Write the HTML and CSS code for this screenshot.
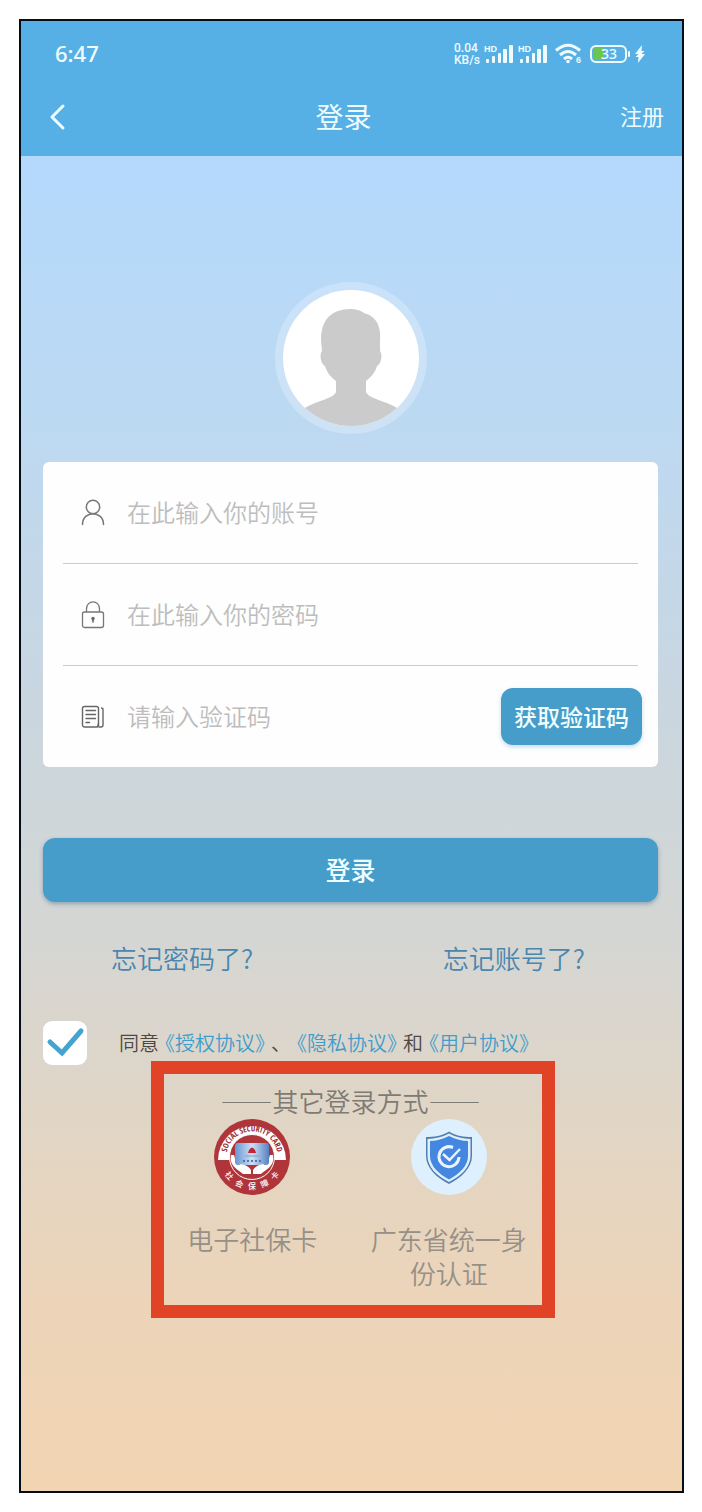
FILE: index.html
```html
<!DOCTYPE html>
<html lang="zh-CN">
<head>
    <meta charset="UTF-8">
    <meta name="viewport" content="width=device-width, initial-scale=1.0">
    <title>登录</title>
    <link rel="stylesheet" href="styles.css">
</head>
<body>
    <div class="phone">
        <header class="top">
            <div class="status-bar">
                <span class="time">6:47</span>
                <div class="status-icons">
                    <div class="speed"><span>0.04</span><span>KB/s</span></div>
                    <svg class="signal" width="30" height="24" viewBox="0 0 30 24" fill="currentColor">
                        <text x="0" y="10" class="svg-hd">HD</text>
                        <rect x="2" y="17" width="3" height="4" rx="1"/>
                        <rect x="8" y="14" width="3" height="7" rx="1"/>
                        <rect x="14" y="11" width="3" height="10" rx="1"/>
                        <rect x="19" y="7" width="4" height="14" rx="1"/>
                        <rect x="25" y="3" width="4" height="18" rx="1"/>
                    </svg>
                    <svg class="signal" width="30" height="24" viewBox="0 0 30 24" fill="currentColor">
                        <text x="0" y="10" class="svg-hd">HD</text>
                        <rect x="2" y="17" width="3" height="4" rx="1"/>
                        <rect x="8" y="14" width="3" height="7" rx="1"/>
                        <rect x="14" y="11" width="3" height="10" rx="1"/>
                        <rect x="19" y="7" width="4" height="14" rx="1"/>
                        <rect x="25" y="3" width="4" height="18" rx="1"/>
                    </svg>
                    <svg class="wifi" width="28" height="24" viewBox="0 0 28 24" fill="none" stroke="currentColor" stroke-width="3">
                        <path d="M1 8.500Q13 -2 25 8.500"/>
                        <path d="M5 13Q13 6 21 13"/>
                        <path d="M9 17Q13 13.500 17 17"/>
                        <circle cx="13" cy="19.500" r="1.800" fill="currentColor" stroke="none"/>
                        <text x="21" y="21" class="svg-six" fill="currentColor" stroke="none">6</text>
                    </svg>
                    <svg class="battery" width="42" height="20" viewBox="0 0 42 20">
                        <rect x="1" y="2" width="35" height="16" rx="5" fill="none" stroke="currentColor" stroke-width="2"/>
                        <path d="M6 4H13V16H6Q3 16 3 13V7Q3 4 6 4Z" fill="#6cc551"/>
                        <path d="M39 8V12" stroke="currentColor" stroke-width="2" stroke-linecap="round"/>
                        <text x="19" y="15" text-anchor="middle" class="svg-level" fill="currentColor">33</text>
                    </svg>
                    <svg class="bolt" width="12" height="20" viewBox="0 0 12 20" fill="currentColor">
                        <path d="M8 1L1 10H4.500L1.500 13H4.500L4 19L11 10H7.500L10.500 7H7.500Z"/>
                    </svg>
                </div>
            </div>
            <nav class="nav-bar">
                <a href="#" class="back" aria-label="返回">
                    <svg width="18" height="28" viewBox="0 0 18 28" fill="none" stroke="currentColor" stroke-width="3" stroke-linecap="round" stroke-linejoin="round">
                        <path d="M14 3L3 14L14 25"/>
                    </svg>
                </a>
                <h1>登录</h1>
                <a href="#" class="register">注册</a>
            </nav>
        </header>

        <main>
            <svg class="avatar" width="152" height="152" viewBox="0 0 152 152">
                <defs>
                    <clipPath id="face"><circle cx="76" cy="76" r="68"/></clipPath>
                </defs>
                <circle cx="76" cy="76" r="76" fill="#fff" opacity="0.25"/>
                <circle cx="76" cy="76" r="68" fill="#fff"/>
                <path clip-path="url(#face)" fill="#cbcbcb" d="M76 27C86 27 89 32 92 32C102 36 106 45 105 58L105 69C108 73 106 82 102 84C100 91 96 95 91 99L91 110C94 117 109 118 122 126L124 146H28L30 126C43 118 58 117 61 110L61 99C56 95 52 91 50 84C46 82 44 73 47 69L46 58C46 38 56 27 76 27Z"/>
            </svg>

            <form>
                <div class="card">
                    <div class="field">
                        <label for="account" aria-label="账号">
                            <svg width="24" height="28" viewBox="0 0 24 28" fill="none" stroke="#777" stroke-width="1.500" stroke-linecap="round">
                                <circle cx="12" cy="8" r="6.700"/>
                                <path d="M1.500 25.500C1.500 11 22.500 11 22.500 25.500"/>
                            </svg>
                        </label>
                        <input type="text" id="account" placeholder="在此输入你的账号">
                    </div>
                    <div class="field">
                        <label for="password" aria-label="密码">
                            <svg width="24" height="28" viewBox="0 0 24 28" fill="none" stroke="#777" stroke-width="1.300">
                                <path d="M5.500 11V8C5.500 -1.500 18.500 -1.500 18.500 8V11"/>
                                <rect x="1.500" y="11" width="21" height="15.500" rx="2"/>
                                <circle cx="12" cy="17.500" r="1.700" fill="#666" stroke="none"/>
                                <path d="M12 17.500V21.500" stroke="#666" stroke-width="1.600"/>
                            </svg>
                        </label>
                        <input type="password" id="password" placeholder="在此输入你的密码">
                    </div>
                    <div class="field">
                        <label for="code" aria-label="验证码">
                            <svg width="24" height="28" viewBox="0 0 24 28" fill="none" stroke="#666" stroke-width="1.400">
                                <rect x="1.500" y="3.500" width="16" height="20.500" rx="2"/>
                                <path d="M17.500 24H20Q22 24 22 22V6.500Q22 5 20 5M16 24Q17.500 23 17.500 20"/>
                                <path d="M5 7.500H14.500M5 11.500H14.500M5 15.500H14.500M5 19.500H8.500" stroke-linecap="round"/>
                            </svg>
                        </label>
                        <input type="text" id="code" placeholder="请输入验证码">
                        <button type="button" class="code-button">获取验证码</button>
                    </div>
                </div>

                <button type="submit" class="login-button">登录</button>

                <div class="forgot">
                    <a href="#">忘记密码了?</a>
                    <a href="#">忘记账号了?</a>
                </div>

                <div class="agreement">
                    <input type="checkbox" id="agree" checked>
                    <label for="agree">同意<a href="#">《授权协议》</a>、<a href="#">《隐私协议》</a>和<a href="#">《用户协议》</a></label>
                </div>
            </form>

            <section class="other-login">
                <h2>——其它登录方式——</h2>
                <div class="methods">
                    <a href="#" class="method">
                        <svg width="76" height="76" viewBox="0 0 76 76">
                            <defs>
                                <path id="arcTop" d="M12.900 43A25.600 25.600 0 1 1 63.100 43"/>
                                <path id="arcBottom" d="M5.500 38A32.500 32.500 0 0 0 70.500 38"/>
                                <linearGradient id="cardFill">
                                    <stop offset="0" stop-color="#6796d2"/>
                                    <stop offset="0.500" stop-color="#cbe0f5"/>
                                    <stop offset="1" stop-color="#5682c3"/>
                                </linearGradient>
                            </defs>
                            <circle cx="38" cy="38" r="38" fill="#b0353a"/>
                            <path d="M4 41A34 34 0 1 1 72 41Z" fill="#fff"/>
                            <circle cx="38" cy="38" r="22.500" fill="#b0353a" stroke="#fff" stroke-width="1"/>
                            <path d="M17 36C15 47 23 50 29 55H36V51C33 46 29 46 28 44L22 43L20 36ZM59 36C61 47 53 50 47 55H40V51C43 46 47 46 48 44L54 43L56 36Z" fill="#fff"/>
                            <rect x="21" y="24" width="34" height="22" rx="3" fill="url(#cardFill)"/>
                            <path d="M35 31Q38 26 41 31L42 34H34Z" fill="#c32632"/>
                            <path d="M31 37H45" stroke="#889dc0" stroke-width="1"/>
                            <path d="M29 42H47" stroke="#365d9b" stroke-width="1.500" stroke-dasharray="2 2"/>
                            <path d="M26 45Q34 46 37 51V55H30ZM50 45Q42 46 39 51V55H46Z" fill="#fff"/>
                            <text class="badge-en"><textPath href="#arcTop" startOffset="50%" text-anchor="middle">SOCIAL SECURITY CARD</textPath></text>
                            <text class="badge-cn"><textPath href="#arcBottom" startOffset="22%" text-anchor="middle">社</textPath></text>
                            <text class="badge-cn"><textPath href="#arcBottom" startOffset="36%" text-anchor="middle">会</textPath></text>
                            <text class="badge-cn"><textPath href="#arcBottom" startOffset="50%" text-anchor="middle">保</textPath></text>
                            <text class="badge-cn"><textPath href="#arcBottom" startOffset="64%" text-anchor="middle">障</textPath></text>
                            <text class="badge-cn"><textPath href="#arcBottom" startOffset="78%" text-anchor="middle">卡</textPath></text>
                        </svg>
                        <span>电子社保卡</span>
                    </a>
                    <a href="#" class="method">
                        <svg width="76" height="76" viewBox="0 0 76 76">
                            <circle cx="38" cy="38" r="38" fill="#def0fd"/>
                            <path d="M38 12.500C45 17 53 18 61 18V37C61 49 50 59 38 65C26 59 15 49 15 37V18C23 18 31 17 38 12.500Z" fill="#527fae"/>
                            <path d="M38 14.500C45 18.500 52 19.500 59.500 20V37C59.500 48 50 57 38 63C26 57 16.500 48 16.500 37V20C24 19.500 31 18.500 38 14.500Z" fill="#def0fd"/>
                            <path d="M38 17C45 20.500 51 22 57 22V37C57 47 48 55 38 60.500C28 55 19 47 19 37V22C25 22 31 20.500 38 17Z" fill="#4486e0"/>
                            <path d="M42 28.500A10 10 0 1 0 48 38" fill="none" stroke="#e9f4ff" stroke-width="3"/>
                            <path d="M32 35L38.500 41L49 30" fill="none" stroke="#e9f4ff" stroke-width="2.500"/>
                        </svg>
                        <span>广东省统一身份认证</span>
                    </a>
                </div>
            </section>
        </main>
    </div>
</body>
</html>
```

FILE: styles.css
```css
/* styles.css */
* {
    box-sizing: border-box;
}

body {
    margin: 0;
    padding: 19px 18px 19px 19px;
    background-color: #fff;
    font-family: "Noto Sans CJK SC", sans-serif;
    font-weight: 350;
}

a {
    text-decoration: none;
    color: inherit;
}

h1, h2 {
    margin: 0;
    font-weight: 400;
}

svg {
    display: block;
    flex-shrink: 0;
}

.phone {
    display: flex;
    flex-direction: column;
    min-height: calc(100vh - 38px);
    border: 2px solid #050d18;
}

/* top */
.top {
    background-color: #56b0e6;
    color: #effcff;
    padding-bottom: 9px;
}

.status-bar {
    display: flex;
    justify-content: space-between;
    align-items: center;
    height: 66px;
    padding: 0 36px 0 34px;
}

.time {
    padding-bottom: 2px;
    font-family: "Noto Sans", sans-serif;
    font-size: 22px;
    font-weight: 500;
}

.status-icons {
    display: flex;
    align-items: center;
    gap: 4px;
}

.speed {
    display: flex;
    flex-direction: column;
    font-family: Roboto, sans-serif;
    font-size: 12px;
    font-weight: 500;
    line-height: 12px;
}

.wifi {
    margin-left: 3px;
}

.battery {
    margin-left: 3px;
    margin-right: -2px;
}

.svg-hd {
    font: bold 9px "Liberation Sans", sans-serif;
}

.svg-six {
    font: bold 9px "Liberation Sans", sans-serif;
}

.svg-level {
    font: 500 14px "Noto Sans", sans-serif;
}

.nav-bar {
    display: flex;
    justify-content: space-between;
    align-items: center;
    height: 60px;
    padding: 0 18px 0 28px;
}

.nav-bar h1 {
    padding-bottom: 2px;
    font-size: 28px;
    line-height: 40px;
}

.register {
    padding-bottom: 4px;
    font-size: 22px;
    font-weight: 400;
}

/* page */
main {
    flex: 1;
    padding: 126px 24px 40px 22px;
    background: linear-gradient(#b4d9fd 0%, #bdd9f2 20%, #cad6df 42%, #d5d6d3 59%, #e4d5c1 76%, #edd4b9 86%, #f2d4b2 100%);
}

.avatar {
    margin: 0 auto 28px;
}

.card {
    padding: 0 20px;
    background-color: #fefefe;
    border-radius: 6px;
}

.field {
    display: flex;
    align-items: center;
    height: 102px;
    padding-left: 18px;
    border-bottom: 1px solid #c8cccf;
}

.field:last-child {
    height: 101px;
    border-bottom: none;
}

.field input {
    flex: 1;
    min-width: 0;
    height: 48px;
    margin-left: 22px;
    padding: 0 0 2px;
    border: none;
    outline: none;
    background: none;
    color: #555;
    font-family: inherit;
    font-size: 24px;
    font-weight: 350;
}

.field input::placeholder {
    color: #bdbdbd;
    opacity: 1;
}

.code-button,
.login-button {
    border: none;
    border-radius: 12px;
    background-color: #469dca;
    color: #f0fdff;
    font-family: inherit;
    font-weight: 500;
    cursor: pointer;
}

.code-button {
    height: 57px;
    margin-right: -4px;
    padding: 0 13px 2px;
    font-size: 23px;
    box-shadow: 0 2px 4px rgba(70, 140, 190, 0.3);
}

.login-button {
    display: block;
    width: 100%;
    height: 64px;
    margin-top: 71px;
    padding: 0 0 2px;
    font-size: 25px;
    box-shadow: 0 2px 4px rgba(40, 90, 120, 0.4);
}

.forgot {
    display: flex;
    justify-content: space-between;
    margin-top: 36px;
    padding: 0 73px 0 68px;
    color: #4a86ae;
    font-size: 26px;
    line-height: 40px;
}

/* agreement */
.agreement {
    display: flex;
    align-items: center;
    margin-top: 43px;
}

.agreement input {
    appearance: none;
    flex-shrink: 0;
    width: 44px;
    height: 44px;
    margin: 0 32px 0 0;
    border-radius: 9px;
    background-color: #fff;
}

.agreement input:checked {
    background-image: url("data:image/svg+xml,%3Csvg xmlns='http://www.w3.org/2000/svg' viewBox='0 0 44 44'%3E%3Cpath d='M7 21L19 32L38 10' fill='none' stroke='%2345a3cf' stroke-width='5' stroke-linecap='round'/%3E%3C/svg%3E");
}

.agreement label {
    color: #4c4844;
    font-size: 20px;
    line-height: 32px;
    white-space: nowrap;
}

/* half-width book title marks, with even room around each link */
.agreement label a {
    padding: 0 6px;
    color: #3f9dcb;
    font-feature-settings: "halt";
}

/* other ways to log in */
.other-login {
    margin: -4px 103px 0 108px;
    padding: 8px 15px 15px 10px;
    border: 13px solid #e04326;
}

.other-login h2 {
    color: #807a74;
    font-size: 26px;
    font-weight: 350;
    line-height: 37px;
    text-align: center;
    white-space: nowrap;
}

.methods {
    display: grid;
    grid-template-columns: 1fr 1fr;
    gap: 40px;
}

.method {
    display: flex;
    flex-direction: column;
    align-items: center;
    gap: 27px;
    color: #969087;
    font-size: 26px;
    line-height: 34px;
    text-align: center;
}

.badge-en {
    font: bold 8px "Liberation Sans Narrow", "Open Sans Condensed", "DejaVu Sans Condensed", sans-serif;
    fill: #9d2c31;
}

.badge-cn {
    font: 500 8px "Noto Sans CJK SC", sans-serif;
    fill: #fff;
}
```
